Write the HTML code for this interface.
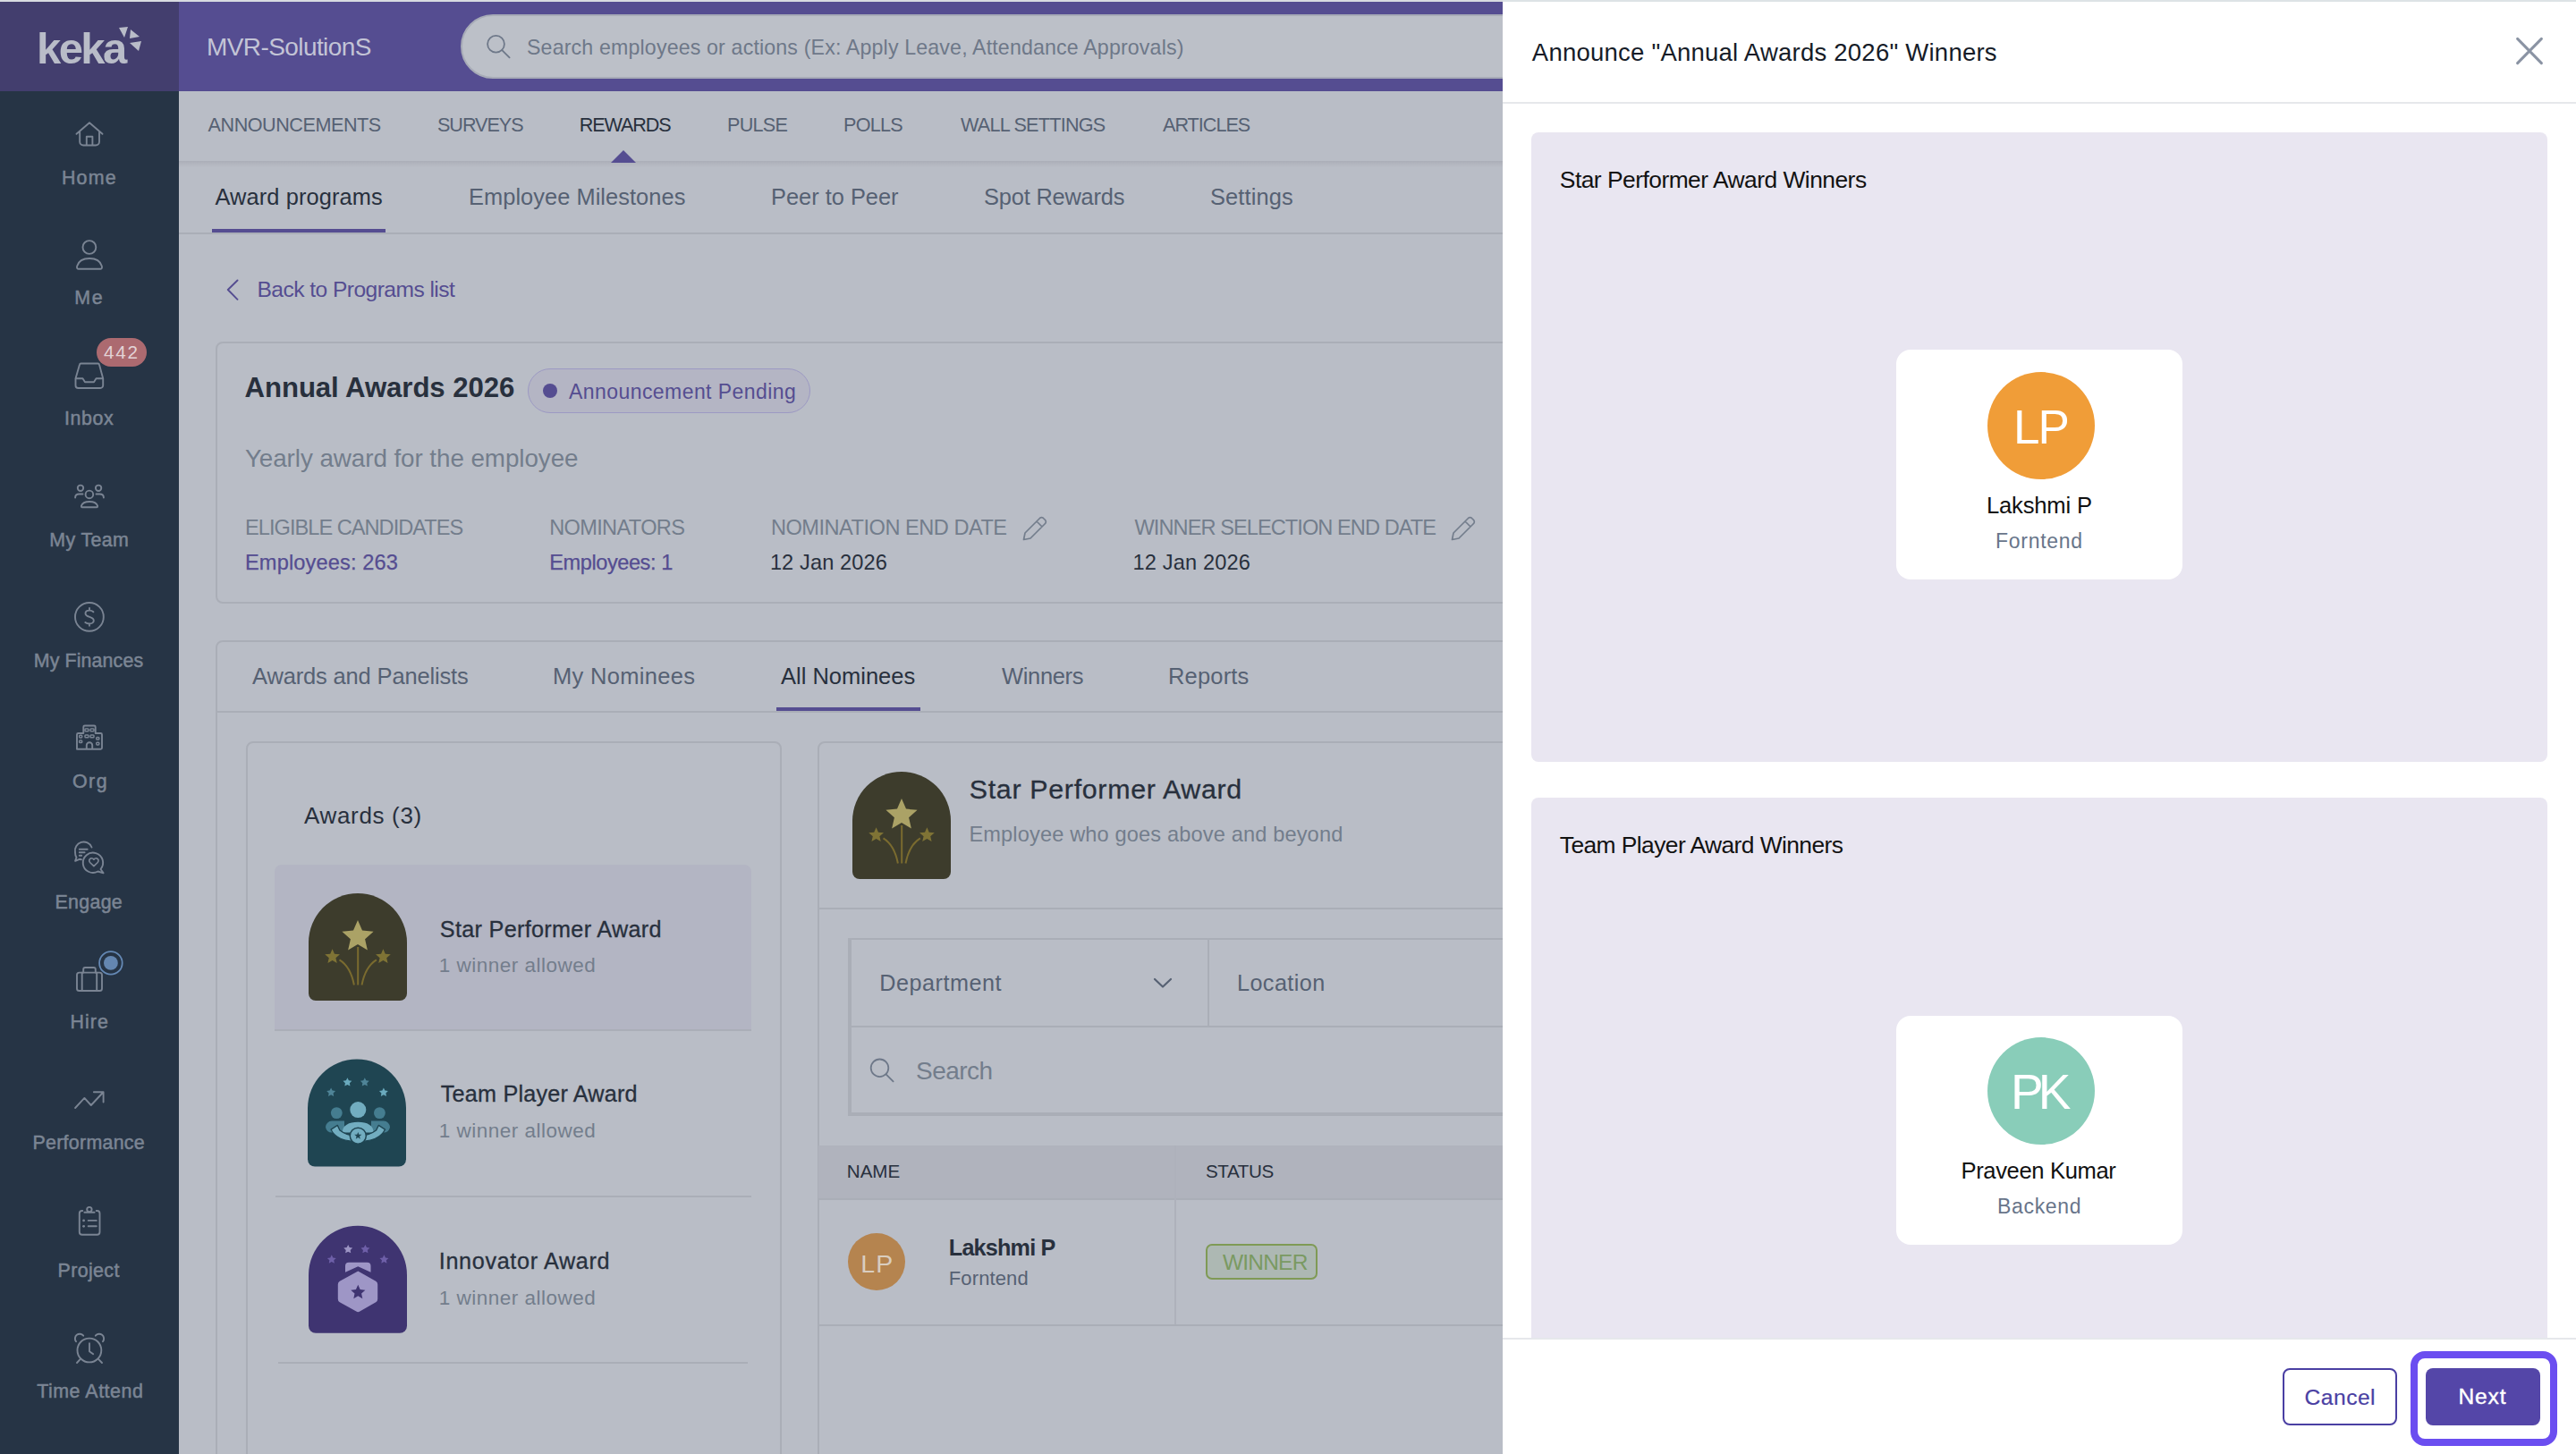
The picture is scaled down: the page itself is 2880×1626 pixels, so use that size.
<!DOCTYPE html><html><head><meta charset="utf-8"><style>
*{box-sizing:border-box;margin:0;padding:0}
html,body{width:2880px;height:1626px;overflow:hidden}
body{position:relative;font-family:"Liberation Sans",sans-serif;background:#b9bdc6}
.a{position:absolute}
.tx{position:absolute;white-space:nowrap;font-family:"Liberation Sans",sans-serif}
svg{position:absolute;overflow:visible}
</style></head><body><div class="a" style="left:0px;top:0px;width:1680px;height:2px;background:#d8dbe1"></div>
<div class="a" style="left:0px;top:2px;width:200px;height:1624px;background:#263445"></div>
<div class="a" style="left:0px;top:2px;width:200px;height:100px;background:#433e6e"></div>
<div class="a" style="left:200px;top:2px;width:1480px;height:100px;background:#554d91"></div>
<div class="a" style="left:515px;top:16px;width:1240px;height:72px;background:#bcc0c8;border:2px solid #a7abb7;border-radius:36px"></div>
<div class="a" style="left:200px;top:180px;width:1480px;height:7px;background:linear-gradient(#abaeb8,#b3b6bf 50%,#b9bdc6)"></div>
<div class="a" style="left:200px;top:260px;width:1480px;height:2px;background:#aaaeb7"></div>
<div class="a" style="left:237px;top:256px;width:194px;height:4px;background:#554d91"></div>
<div class="a" style="left:241px;top:382px;width:1480px;height:293px;border:2px solid #aaaeb7;border-radius:8px"></div>
<div class="a" style="left:590px;top:412px;width:316px;height:50px;background:#b4b5c4;border:1.5px solid #9c99c3;border-radius:25px"></div>
<div class="a" style="left:607px;top:428.8px;width:16px;height:16px;background:#554d91;border-radius:50%"></div>
<div class="a" style="left:241px;top:716px;width:1480px;height:1000px;border:2px solid #aaaeb7;border-radius:8px"></div>
<div class="a" style="left:241px;top:795px;width:1480px;height:2px;background:#aaaeb7"></div>
<div class="a" style="left:868px;top:791px;width:161px;height:4px;background:#554d91"></div>
<div class="a" style="left:275px;top:829px;width:599px;height:900px;border:2px solid #aaaeb7;border-radius:8px"></div>
<div class="a" style="left:307px;top:967px;width:533px;height:185px;background:#b3b5c3;border-radius:8px 8px 0 0"></div>
<div class="a" style="left:307px;top:1151px;width:533px;height:2px;background:#aaaeb7"></div>
<div class="a" style="left:308px;top:1337px;width:532px;height:2px;background:#aaaeb7"></div>
<div class="a" style="left:311px;top:1523px;width:525px;height:2px;background:#aaaeb7"></div>
<div class="a" style="left:914px;top:829px;width:900px;height:900px;border:2px solid #aaaeb7;border-radius:8px"></div>
<div class="a" style="left:915px;top:1015px;width:800px;height:2px;background:#aaaeb7"></div>
<div class="a" style="left:948px;top:1049px;width:800px;height:199px;border-top:2px solid #aaaeb7;border-left:4px solid #aaaeb7;border-bottom:4px solid #aaaeb7"></div>
<div class="a" style="left:1350px;top:1049px;width:2px;height:99px;background:#aaaeb7"></div>
<div class="a" style="left:950px;top:1147px;width:800px;height:2px;background:#aaaeb7"></div>
<div class="a" style="left:915px;top:1281px;width:800px;height:60px;background:#b0b3bd"></div>
<div class="a" style="left:915px;top:1340px;width:800px;height:2px;background:#aaaeb7"></div>
<div class="a" style="left:1313px;top:1281px;width:2px;height:201px;background:#aeb1bb"></div>
<div class="a" style="left:915px;top:1481px;width:800px;height:2px;background:#aaaeb7"></div>
<div class="a" style="left:948px;top:1379px;width:64px;height:64px;background:#b5844f;border-radius:50%"></div>
<div class="a" style="left:1348px;top:1391px;width:125px;height:40px;background:#adb8b3;border:2px solid #7f9a55;border-radius:7px"></div>
<div class="a" style="left:108px;top:378px;width:56px;height:32px;background:#ac6a70;border-radius:16px"></div>
<svg width="2880" height="1626" style="left:0;top:0"><path fill="none" stroke="#7a8493" stroke-width="1.9" stroke-linecap="round" stroke-linejoin="round" d="M85.5 149.8 L100 137.3 L114.5 149.8 M89.2 147 V158.5 a4 4 0 0 0 4 4 H107 a4 4 0 0 0 4-4 V147 M96.8 162.5 V152.8 H103.4 V162.5"/><circle fill="none" stroke="#7a8493" stroke-width="1.9" stroke-linecap="round" stroke-linejoin="round" cx="99.9" cy="276.5" r="7.4"/><path fill="none" stroke="#7a8493" stroke-width="1.9" stroke-linecap="round" stroke-linejoin="round" d="M87.5 300.7 C86 300.7 85.8 299 86.2 297.5 C87.8 292 93 289 100 289 C107 289 112.2 292 113.8 297.5 C114.2 299 114 300.7 112.5 300.7 Z"/><path fill="none" stroke="#7a8493" stroke-width="1.9" stroke-linecap="round" stroke-linejoin="round" d="M90.5 406.5 H109.5 a1.5 1.5 0 0 1 1.5 1.2 L115.2 423.2 V431 a3 3 0 0 1-3 3 H87.5 a3 3 0 0 1-3-3 V423.2 L89 407.7 a1.5 1.5 0 0 1 1.5-1.2 Z M84.5 423.2 H92.5 L95 427.2 H105 L107.5 423.2 H115.2"/><circle fill="none" stroke="#7a8493" stroke-width="1.9" stroke-linecap="round" stroke-linejoin="round" cx="99.9" cy="552.9" r="4.3"/><circle fill="none" stroke="#7a8493" stroke-width="1.9" stroke-linecap="round" stroke-linejoin="round" cx="90" cy="545.8" r="3.2"/><circle fill="none" stroke="#7a8493" stroke-width="1.9" stroke-linecap="round" stroke-linejoin="round" cx="110.1" cy="545.8" r="3.2"/><path fill="none" stroke="#7a8493" stroke-width="1.9" stroke-linecap="round" stroke-linejoin="round" d="M92 567.3 C91 567.3 90.8 566.5 91 565.5 C92 562.5 95.5 561 100 561 C104.5 561 108 562.5 109 565.5 C109.2 566.5 109 567.3 108 567.3 Z M92.5 552.5 H88.5 C86 552.5 84.1 554 84.1 556.6 M107.5 552.5 H111.5 C114 552.5 115.9 554 115.9 556.6"/><circle fill="none" stroke="#7a8493" stroke-width="1.9" stroke-linecap="round" stroke-linejoin="round" cx="99.9" cy="689.9" r="15.9"/><path fill="none" stroke="#7a8493" stroke-width="1.9" stroke-linecap="round" stroke-linejoin="round" d="M104.4 684.3 C103 683 101.5 682.6 100 682.6 C97.5 682.6 95.5 683.8 95.5 686 C95.5 691 104.8 688.8 104.8 694 C104.8 696.2 102.5 697.5 100 697.5 C98 697.5 96.5 697 95.3 696 M100 680 V682.6 M100 697.5 V699.7"/><path fill="none" stroke="#7a8493" stroke-width="1.9" stroke-linecap="round" stroke-linejoin="round" d="M86 837.8 V821.5 a1.5 1.5 0 0 1 1.5-1.5 H93.3 V813 a1.5 1.5 0 0 1 1.5-1.5 H105.2 a1.5 1.5 0 0 1 1.5 1.5 V820 H112.5 a1.5 1.5 0 0 1 1.5 1.5 V836.3 a1.5 1.5 0 0 1-1.5 1.5 Z M96.8 837.8 V833.5 a3.2 3.2 0 0 1 6.4 0 V837.8"/><rect fill="none" stroke="#7a8493" stroke-width="1.5" x="88.7" y="822.3" width="3" height="2.6" rx="0.8"/><rect fill="none" stroke="#7a8493" stroke-width="1.5" x="88.7" y="828" width="3" height="2.6" rx="0.8"/><rect fill="none" stroke="#7a8493" stroke-width="1.5" x="107.8" y="824.5" width="3" height="2.6" rx="0.8"/><rect fill="none" stroke="#7a8493" stroke-width="1.5" x="107.8" y="830.3" width="3" height="2.6" rx="0.8"/><rect fill="none" stroke="#7a8493" stroke-width="1.5" x="95" y="815" width="4" height="2.8" rx="0.8"/><rect fill="none" stroke="#7a8493" stroke-width="1.5" x="101" y="815" width="4" height="2.8" rx="0.8"/><rect fill="none" stroke="#7a8493" stroke-width="1.5" x="95" y="822" width="4" height="2.8" rx="0.8"/><rect fill="none" stroke="#7a8493" stroke-width="1.5" x="101" y="822" width="4" height="2.8" rx="0.8"/><path fill="none" stroke="#7a8493" stroke-width="1.9" stroke-linecap="round" stroke-linejoin="round" d="M102.5 947.5 A9.7 9.7 0 0 0 84 953 C84 955.5 84.5 957.5 85.5 958.8 L84.1 962.9 L88.8 960.8 L91 961.3 M88.8 949.8 H97.7 M88.8 953.2 H94.6 M88.8 956.7 H91.2"/><path fill="none" stroke="#7a8493" stroke-width="1.9" stroke-linecap="round" stroke-linejoin="round" d="M112.5 972 A11.2 11.2 0 1 0 109.5 974.5 L115.6 976.3 Z"/><path fill="none" stroke="#7a8493" stroke-width="1.7" stroke-linejoin="round" d="M104.9 968.6 L100.6 964.5 C99.2 963 99.5 960.3 101.8 959.8 C103.3 959.5 104.3 960.3 104.9 961.2 C105.5 960.3 106.5 959.5 108 959.8 C110.3 960.3 110.6 963 109.2 964.5 Z"/><rect fill="none" stroke="#7a8493" stroke-width="1.9" stroke-linecap="round" stroke-linejoin="round" x="86" y="1087.6" width="28" height="20.4" rx="2.6"/><path fill="none" stroke="#7a8493" stroke-width="1.9" stroke-linecap="round" stroke-linejoin="round" d="M93.2 1087.6 V1084 a2 2 0 0 1 2-2 H104.8 a2 2 0 0 1 2 2 V1087.6 M91.7 1087.6 V1108 M108.2 1087.6 V1108"/><circle cx="123.9" cy="1076.9" r="12.8" fill="#263445" stroke="#6589b5" stroke-width="1.8"/><circle cx="123.9" cy="1076.9" r="7.9" fill="#6486b0"/><path fill="none" stroke="#7a8493" stroke-width="1.9" stroke-linecap="round" stroke-linejoin="round" d="M84.1 1239 L94.4 1227.9 L101.8 1236 L115.3 1221.5 M104.9 1221.2 H115.6 V1232.5"/><path fill="none" stroke="#7a8493" stroke-width="1.9" stroke-linecap="round" stroke-linejoin="round" d="M92.3 1354 H91.8 a3 3 0 0 0-3 3 V1377.7 a3 3 0 0 0 3 3 H108.5 a3 3 0 0 0 3-3 V1357 a3 3 0 0 0-3-3 H107.7 M94.4 1355.8 H105.6"/><circle fill="none" stroke="#7a8493" stroke-width="1.9" stroke-linecap="round" stroke-linejoin="round" cx="99.9" cy="1352.6" r="2.7"/><circle cx="93.6" cy="1364.9" r="1.4" fill="#7a8493"/><circle cx="93.6" cy="1371.3" r="1.4" fill="#7a8493"/><path fill="none" stroke="#7a8493" stroke-width="1.9" stroke-linecap="round" stroke-linejoin="round" d="M98.7 1364.9 H107.8 M98.7 1371.3 H107.8"/><circle fill="none" stroke="#7a8493" stroke-width="1.9" stroke-linecap="round" stroke-linejoin="round" cx="99.9" cy="1510" r="13.4"/><path fill="none" stroke="#7a8493" stroke-width="1.9" stroke-linecap="round" stroke-linejoin="round" d="M100 1502.3 V1511.2 L104.2 1514.3 M85 1500.2 A5.2 5.2 0 0 1 93.2 1493.7 M115 1500.2 A5.2 5.2 0 0 0 106.8 1493.7 M89.8 1519.8 L86 1524 M110 1519.8 L114 1524"/><polygon fill="#b9bcc8" points="133,31 143,30 139,42"/><polygon fill="#b9bcc8" points="146,33 156,41 145,43"/><polygon fill="#b9bcc8" points="145,48 158,46 155,57"/><circle cx="554.5" cy="49.3" r="9.4" fill="none" stroke="#6e7889" stroke-width="1.8"/><path d="M561.3 56.1 L569.6 64.4" stroke="#6e7889" stroke-width="1.8" stroke-linecap="round"/><polygon fill="#554d91" points="683,182 697,168 711,182"/><path d="M265.5 313.5 L254.8 324 L265.5 334.8" fill="none" stroke="#554d91" stroke-width="1.9" stroke-linecap="round" stroke-linejoin="round"/><path transform="translate(1143,579)" d="M1.5 24.5 L3 17 L19 1 a3 3 0 0 1 5 0 L25 2 a3 3 0 0 1 0 5 L9 23 Z M16 4 L22 10" fill="none" stroke="#737d8c" stroke-width="1.7" stroke-linejoin="round"/><path transform="translate(1622,579)" d="M1.5 24.5 L3 17 L19 1 a3 3 0 0 1 5 0 L25 2 a3 3 0 0 1 0 5 L9 23 Z M16 4 L22 10" fill="none" stroke="#737d8c" stroke-width="1.7" stroke-linejoin="round"/><path d="M1291 1095 L1300 1103.5 L1309 1095" fill="none" stroke="#566173" stroke-width="2.2" stroke-linecap="round" stroke-linejoin="round"/><circle cx="983.5" cy="1194.3" r="9.8" fill="none" stroke="#6e7889" stroke-width="1.8"/><path d="M990.6 1201.4 L998.6 1209.4" stroke="#6e7889" stroke-width="1.8" stroke-linecap="round"/><g transform="translate(345,999)"><path d="M0 55 A55 55 0 0 1 110 55 V112 a8 8 0 0 1-8 8 H8 a8 8 0 0 1-8-8 Z" fill="#3d3c2c"/><polygon fill="#aba266" points="55.00,30.00 60.00,41.62 72.59,42.78 63.08,51.13 65.87,63.47 55.00,57.00 44.13,63.47 46.92,51.13 37.41,42.78 50.00,41.62"/><polygon fill="#7f7335" points="26.60,62.20 28.95,67.76 34.97,68.28 30.40,72.24 31.77,78.12 26.60,75.00 21.43,78.12 22.80,72.24 18.23,68.28 24.25,67.76"/><polygon fill="#7f7335" points="83.40,62.20 85.75,67.76 91.77,68.28 87.20,72.24 88.57,78.12 83.40,75.00 78.23,78.12 79.60,72.24 75.03,68.28 81.05,67.76"/><path d="M55.2 60 V102.5 M34.5 74.3 Q47 82 50.9 102.5 M75.9 74.3 Q63.4 82 59.5 102.5" fill="none" stroke="#7a6b2f" stroke-width="2"/></g><g transform="translate(344,1184.6)"><path d="M0 55 A55 55 0 0 1 110 55 V112 a8 8 0 0 1-8 8 H8 a8 8 0 0 1-8-8 Z" fill="#1f4552"/><polygon fill="#6aaabd" points="44.40,20.60 45.93,23.70 49.35,24.19 46.87,26.60 47.46,30.01 44.40,28.40 41.34,30.01 41.93,26.60 39.45,24.19 42.87,23.70"/><polygon fill="#4f8497" points="63.80,20.60 65.33,23.70 68.75,24.19 66.27,26.60 66.86,30.01 63.80,28.40 60.74,30.01 61.33,26.60 58.85,24.19 62.27,23.70"/><polygon fill="#4f8497" points="26.10,31.90 27.63,35.00 31.05,35.49 28.57,37.90 29.16,41.31 26.10,39.70 23.04,41.31 23.63,37.90 21.15,35.49 24.57,35.00"/><polygon fill="#6aaabd" points="84.90,31.90 86.43,35.00 89.85,35.49 87.37,37.90 87.96,41.31 84.90,39.70 81.84,41.31 82.43,37.90 79.95,35.49 83.37,35.00"/><circle cx="32.3" cy="60" r="6.4" fill="#457d90"/><circle cx="80.4" cy="60" r="6.4" fill="#457d90"/><circle cx="56.3" cy="56.5" r="9" fill="#72adc0"/><path d="M20 76 a7 7 0 0 1 7-7 H41 V82 H27 a7 7 0 0 1-7-6 Z M92 76 a7 7 0 0 0-7-7 H71 V82 H85 a7 7 0 0 0 7-6 Z" fill="#457d90"/><path d="M38.7 82 C38.7 74 46 70.2 56.3 70.2 C66.6 70.2 73.6 74 73.6 82 Z" fill="#72adc0"/><path d="M26 78.5 L33.3 73.8 L36 79.5 Q44 86 56 86 Q68 86 76.5 79.5 L79.3 73.8 L86.5 78.5 Q80 92 56 92 Q32 92 26 78.5 Z" fill="#72adc0" stroke="#1f4552" stroke-width="1.3" stroke-linejoin="round"/><circle cx="56.3" cy="85.6" r="9" fill="#72adc0" stroke="#1f4552" stroke-width="1.5"/><polygon fill="#1f4552" points="56.30,81.30 57.36,84.14 60.39,84.27 58.02,86.16 58.83,89.08 56.30,87.41 53.77,89.08 54.58,86.16 52.21,84.27 55.24,84.14"/></g><g transform="translate(345,1370.8)"><path d="M0 55 A55 55 0 0 1 110 55 V112 a8 8 0 0 1-8 8 H8 a8 8 0 0 1-8-8 Z" fill="#3f3471"/><polygon fill="#9c94c4" points="44.20,21.10 45.73,24.20 49.15,24.69 46.67,27.10 47.26,30.51 44.20,28.90 41.14,30.51 41.73,27.10 39.25,24.69 42.67,24.20"/><polygon fill="#6e5fa8" points="63.40,21.10 64.93,24.20 68.35,24.69 65.87,27.10 66.46,30.51 63.40,28.90 60.34,30.51 60.93,27.10 58.45,24.69 61.87,24.20"/><polygon fill="#6e5fa8" points="25.80,32.50 27.33,35.60 30.75,36.09 28.27,38.50 28.86,41.91 25.80,40.30 22.74,41.91 23.33,38.50 20.85,36.09 24.27,35.60"/><polygon fill="#6e5fa8" points="84.40,32.50 85.93,35.60 89.35,36.09 86.87,38.50 87.46,41.91 84.40,40.30 81.34,41.91 81.93,38.50 79.45,36.09 82.87,35.60"/><path d="M41 52 V45 a4 4 0 0 1 4-4 H65.5 a4 4 0 0 1 4 4 V52 L55.3 45.5 Z" fill="#9e96c6"/><path d="M55.3 50.6 L75.2 62 a4 4 0 0 1 2 3.5 V82 a4 4 0 0 1-2 3.5 L57.3 95.8 a4 4 0 0 1-4 0 L34.8 85.5 a4 4 0 0 1-2-3.5 V65.5 a4 4 0 0 1 2-3.5 Z" fill="#9e96c6"/><polygon fill="#3f3471" points="55.30,66.00 57.65,71.26 63.38,71.87 59.10,75.74 60.30,81.38 55.30,78.50 50.30,81.38 51.50,75.74 47.22,71.87 52.95,71.26"/></g><g transform="translate(953,863)"><path d="M0 55 A55 55 0 0 1 110 55 V112 a8 8 0 0 1-8 8 H8 a8 8 0 0 1-8-8 Z" fill="#3d3c2c"/><polygon fill="#aba266" points="55.00,30.00 60.00,41.62 72.59,42.78 63.08,51.13 65.87,63.47 55.00,57.00 44.13,63.47 46.92,51.13 37.41,42.78 50.00,41.62"/><polygon fill="#7f7335" points="26.60,62.20 28.95,67.76 34.97,68.28 30.40,72.24 31.77,78.12 26.60,75.00 21.43,78.12 22.80,72.24 18.23,68.28 24.25,67.76"/><polygon fill="#7f7335" points="83.40,62.20 85.75,67.76 91.77,68.28 87.20,72.24 88.57,78.12 83.40,75.00 78.23,78.12 79.60,72.24 75.03,68.28 81.05,67.76"/><path d="M55.2 60 V102.5 M34.5 74.3 Q47 82 50.9 102.5 M75.9 74.3 Q63.4 82 59.5 102.5" fill="none" stroke="#7a6b2f" stroke-width="2"/></g></svg>
<div class="tx" style="left:41px;top:29.6px;font-size:49px;line-height:49px;font-weight:700;color:#b9bcc8;letter-spacing:-2.6px">keka</div>
<div class="a" style="left:1680px;top:0px;width:1200px;height:1626px;background:#ffffff"></div>
<div class="a" style="left:1680px;top:0px;width:1200px;height:2px;background:#dde3e6"></div>
<div class="a" style="left:1680px;top:114px;width:1200px;height:2px;background:#e6e8eb"></div>
<div class="a" style="left:1712px;top:148px;width:1136px;height:704px;background:#e9e6f1;border-radius:8px"></div>
<div class="a" style="left:2120px;top:391px;width:320px;height:257px;background:#fff;border-radius:16px"></div>
<div class="a" style="left:2222px;top:416px;width:120px;height:120px;background:#f09d38;border-radius:50%"></div>
<div class="a" style="left:1712px;top:892px;width:1136px;height:700px;background:#e9e6f1;border-radius:8px"></div>
<div class="a" style="left:2120px;top:1136px;width:320px;height:256px;background:#fff;border-radius:16px"></div>
<div class="a" style="left:2222px;top:1160px;width:120px;height:120px;background:#89cdb9;border-radius:50%"></div>
<div class="a" style="left:1680px;top:1496px;width:1200px;height:130px;background:#fff;border-top:2px solid #e6e8eb"></div>
<div class="a" style="left:2552px;top:1530px;width:128px;height:64px;border:2px solid #4a3fa3;border-radius:8px;background:#fff"></div>
<div class="a" style="left:2695px;top:1511px;width:164px;height:106px;border:8px solid #6b4ef0;border-radius:16px"></div>
<div class="a" style="left:2712px;top:1530px;width:128px;height:64px;background:#5446a8;border-radius:8px"></div>
<svg width="2880" height="1626" style="left:0;top:0"><path d="M2814.6 43.4 L2841.4 70.6 M2841.4 43.4 L2814.6 70.6" stroke="#8a93a3" stroke-width="3" stroke-linecap="round"/></svg>
<div class="tx" style="left:69.00px;top:188.61px;font-size:21.40px;line-height:21.40px;font-weight:400;color:#7b8594;letter-spacing:1.167px;-webkit-text-stroke:0.5px #7b8594;">Home</div>
<div class="tx" style="left:83.30px;top:323.21px;font-size:21.40px;line-height:21.40px;font-weight:400;color:#7b8594;letter-spacing:1.700px;-webkit-text-stroke:0.5px #7b8594;">Me</div>
<div class="tx" style="left:72.00px;top:457.81px;font-size:21.40px;line-height:21.40px;font-weight:400;color:#7b8594;letter-spacing:0.575px;-webkit-text-stroke:0.5px #7b8594;">Inbox</div>
<div class="tx" style="left:55.30px;top:593.61px;font-size:21.40px;line-height:21.40px;font-weight:400;color:#7b8594;letter-spacing:0.367px;-webkit-text-stroke:0.5px #7b8594;">My Team</div>
<div class="tx" style="left:37.70px;top:729.01px;font-size:21.40px;line-height:21.40px;font-weight:400;color:#7b8594;letter-spacing:0.120px;-webkit-text-stroke:0.5px #7b8594;">My Finances</div>
<div class="tx" style="left:80.90px;top:863.81px;font-size:21.40px;line-height:21.40px;font-weight:400;color:#7b8594;letter-spacing:1.550px;-webkit-text-stroke:0.5px #7b8594;">Org</div>
<div class="tx" style="left:61.40px;top:998.81px;font-size:21.40px;line-height:21.40px;font-weight:400;color:#7b8594;letter-spacing:0.320px;-webkit-text-stroke:0.5px #7b8594;">Engage</div>
<div class="tx" style="left:78.50px;top:1133.21px;font-size:21.40px;line-height:21.40px;font-weight:400;color:#7b8594;letter-spacing:1.033px;-webkit-text-stroke:0.5px #7b8594;">Hire</div>
<div class="tx" style="left:36.40px;top:1268.41px;font-size:21.40px;line-height:21.40px;font-weight:400;color:#7b8594;letter-spacing:0.290px;-webkit-text-stroke:0.5px #7b8594;">Performance</div>
<div class="tx" style="left:64.50px;top:1410.61px;font-size:21.40px;line-height:21.40px;font-weight:400;color:#7b8594;letter-spacing:0.383px;-webkit-text-stroke:0.5px #7b8594;">Project</div>
<div class="tx" style="left:41.20px;top:1545.81px;font-size:21.40px;line-height:21.40px;font-weight:400;color:#7b8594;letter-spacing:0.530px;-webkit-text-stroke:0.5px #7b8594;">Time Attend</div>
<div class="tx" style="left:116.00px;top:384.21px;font-size:20.70px;line-height:20.70px;font-weight:400;color:#e3d3d6;letter-spacing:1.750px;">442</div>
<div class="tx" style="left:231.00px;top:39.40px;font-size:28.00px;line-height:28.00px;font-weight:400;color:#c3c4d6;letter-spacing:-0.583px;">MVR-SolutionS</div>
<div class="tx" style="left:589.00px;top:42.28px;font-size:23.20px;line-height:23.20px;font-weight:400;color:#6e7889;letter-spacing:0.152px;">Search employees or actions (Ex: Apply Leave, Attendance Approvals)</div>
<div class="tx" style="left:232.60px;top:129.24px;font-size:21.60px;line-height:21.60px;font-weight:400;color:#566173;letter-spacing:-0.467px;">ANNOUNCEMENTS</div>
<div class="tx" style="left:489.00px;top:129.24px;font-size:21.60px;line-height:21.60px;font-weight:400;color:#566173;letter-spacing:-1.033px;">SURVEYS</div>
<div class="tx" style="left:647.80px;top:129.24px;font-size:21.60px;line-height:21.60px;font-weight:400;color:#28303d;letter-spacing:-1.133px;">REWARDS</div>
<div class="tx" style="left:813.00px;top:129.24px;font-size:21.60px;line-height:21.60px;font-weight:400;color:#566173;letter-spacing:-0.750px;">PULSE</div>
<div class="tx" style="left:943.00px;top:129.24px;font-size:21.60px;line-height:21.60px;font-weight:400;color:#566173;letter-spacing:-0.750px;">POLLS</div>
<div class="tx" style="left:1074.00px;top:129.24px;font-size:21.60px;line-height:21.60px;font-weight:400;color:#566173;letter-spacing:-0.750px;">WALL SETTINGS</div>
<div class="tx" style="left:1300.00px;top:129.24px;font-size:21.60px;line-height:21.60px;font-weight:400;color:#566173;letter-spacing:-1.000px;">ARTICLES</div>
<div class="tx" style="left:240.50px;top:208.41px;font-size:25.40px;line-height:25.40px;font-weight:400;color:#28303d;letter-spacing:0.115px;">Award programs</div>
<div class="tx" style="left:524.00px;top:208.41px;font-size:25.40px;line-height:25.40px;font-weight:400;color:#566173;letter-spacing:0.056px;">Employee Milestones</div>
<div class="tx" style="left:862.00px;top:208.41px;font-size:25.40px;line-height:25.40px;font-weight:400;color:#566173;letter-spacing:0.000px;">Peer to Peer</div>
<div class="tx" style="left:1100.00px;top:208.41px;font-size:25.40px;line-height:25.40px;font-weight:400;color:#566173;letter-spacing:-0.182px;">Spot Rewards</div>
<div class="tx" style="left:1353.00px;top:208.41px;font-size:25.40px;line-height:25.40px;font-weight:400;color:#566173;letter-spacing:0.143px;">Settings</div>
<div class="tx" style="left:287.50px;top:312.09px;font-size:24.60px;line-height:24.60px;font-weight:400;color:#554d91;letter-spacing:-0.550px;">Back to Programs list</div>
<div class="tx" style="left:273.60px;top:417.68px;font-size:31.20px;line-height:31.20px;font-weight:700;color:#28303d;letter-spacing:-0.100px;">Annual Awards 2026</div>
<div class="tx" style="left:636.10px;top:427.45px;font-size:23.00px;line-height:23.00px;font-weight:400;color:#554d91;letter-spacing:0.426px;">Announcement Pending</div>
<div class="tx" style="left:273.90px;top:498.77px;font-size:27.80px;line-height:27.80px;font-weight:400;color:#737d8c;letter-spacing:-0.064px;">Yearly award for the employee</div>
<div class="tx" style="left:274.00px;top:578.74px;font-size:23.60px;line-height:23.60px;font-weight:400;color:#737d8c;letter-spacing:-0.972px;">ELIGIBLE CANDIDATES</div>
<div class="tx" style="left:274.00px;top:617.94px;font-size:23.60px;line-height:23.60px;font-weight:400;color:#554d91;letter-spacing:0.131px;-webkit-text-stroke:0.25px #554d91;">Employees: 263</div>
<div class="tx" style="left:614.20px;top:578.74px;font-size:23.60px;line-height:23.60px;font-weight:400;color:#737d8c;letter-spacing:-0.667px;">NOMINATORS</div>
<div class="tx" style="left:614.20px;top:617.94px;font-size:23.60px;line-height:23.60px;font-weight:400;color:#554d91;letter-spacing:-0.436px;-webkit-text-stroke:0.25px #554d91;">Employees: 1</div>
<div class="tx" style="left:861.90px;top:578.74px;font-size:23.60px;line-height:23.60px;font-weight:400;color:#737d8c;letter-spacing:-0.494px;">NOMINATION END DATE</div>
<div class="tx" style="left:860.90px;top:617.94px;font-size:23.60px;line-height:23.60px;font-weight:400;color:#28303d;letter-spacing:0.110px;">12 Jan 2026</div>
<div class="tx" style="left:1268.50px;top:578.74px;font-size:23.60px;line-height:23.60px;font-weight:400;color:#737d8c;letter-spacing:-0.938px;">WINNER SELECTION END DATE</div>
<div class="tx" style="left:1266.50px;top:617.94px;font-size:23.60px;line-height:23.60px;font-weight:400;color:#28303d;letter-spacing:0.150px;">12 Jan 2026</div>
<div class="tx" style="left:282.00px;top:743.53px;font-size:25.50px;line-height:25.50px;font-weight:400;color:#566173;letter-spacing:-0.158px;">Awards and Panelists</div>
<div class="tx" style="left:618.00px;top:743.53px;font-size:25.50px;line-height:25.50px;font-weight:400;color:#566173;letter-spacing:0.300px;">My Nominees</div>
<div class="tx" style="left:873.00px;top:743.53px;font-size:25.50px;line-height:25.50px;font-weight:400;color:#28303d;letter-spacing:0.000px;">All Nominees</div>
<div class="tx" style="left:1120.00px;top:743.53px;font-size:25.50px;line-height:25.50px;font-weight:400;color:#566173;letter-spacing:-0.333px;">Winners</div>
<div class="tx" style="left:1306.00px;top:743.53px;font-size:25.50px;line-height:25.50px;font-weight:400;color:#566173;letter-spacing:0.167px;">Reports</div>
<div class="tx" style="left:340.00px;top:898.90px;font-size:26.00px;line-height:26.00px;font-weight:400;color:#28303d;letter-spacing:0.667px;">Awards (3)</div>
<div class="tx" style="left:491.80px;top:1027.18px;font-size:25.20px;line-height:25.20px;font-weight:400;color:#28303d;letter-spacing:0.316px;-webkit-text-stroke:0.3px #28303d;">Star Performer Award</div>
<div class="tx" style="left:490.80px;top:1069.28px;font-size:22.50px;line-height:22.50px;font-weight:400;color:#737d8c;letter-spacing:0.493px;">1 winner allowed</div>
<div class="tx" style="left:492.80px;top:1211.18px;font-size:25.20px;line-height:25.20px;font-weight:400;color:#28303d;letter-spacing:0.200px;-webkit-text-stroke:0.3px #28303d;">Team Player Award</div>
<div class="tx" style="left:490.80px;top:1254.28px;font-size:22.50px;line-height:22.50px;font-weight:400;color:#737d8c;letter-spacing:0.493px;">1 winner allowed</div>
<div class="tx" style="left:490.80px;top:1398.18px;font-size:25.20px;line-height:25.20px;font-weight:400;color:#28303d;letter-spacing:0.657px;-webkit-text-stroke:0.3px #28303d;">Innovator Award</div>
<div class="tx" style="left:490.80px;top:1441.28px;font-size:22.50px;line-height:22.50px;font-weight:400;color:#737d8c;letter-spacing:0.493px;">1 winner allowed</div>
<div class="tx" style="left:1083.80px;top:867.36px;font-size:30.40px;line-height:30.40px;font-weight:400;color:#28303d;letter-spacing:0.674px;-webkit-text-stroke:0.3px #28303d;">Star Performer Award</div>
<div class="tx" style="left:1083.40px;top:921.74px;font-size:23.60px;line-height:23.60px;font-weight:400;color:#737d8c;letter-spacing:0.142px;">Employee who goes above and beyond</div>
<div class="tx" style="left:983.20px;top:1087.38px;font-size:25.20px;line-height:25.20px;font-weight:400;color:#566173;letter-spacing:0.522px;">Department</div>
<div class="tx" style="left:1383.00px;top:1087.38px;font-size:25.20px;line-height:25.20px;font-weight:400;color:#566173;letter-spacing:0.429px;">Location</div>
<div class="tx" style="left:1024.00px;top:1183.80px;font-size:28.00px;line-height:28.00px;font-weight:400;color:#737d8c;letter-spacing:-0.520px;">Search</div>
<div class="tx" style="left:946.80px;top:1299.69px;font-size:20.60px;line-height:20.60px;font-weight:400;color:#28303d;letter-spacing:-0.033px;">NAME</div>
<div class="tx" style="left:1347.90px;top:1299.69px;font-size:20.60px;line-height:20.60px;font-weight:400;color:#28303d;letter-spacing:-0.380px;">STATUS</div>
<div class="tx" style="left:1060.80px;top:1383.38px;font-size:25.20px;line-height:25.20px;font-weight:700;color:#28303d;letter-spacing:-0.800px;">Lakshmi P</div>
<div class="tx" style="left:1060.80px;top:1419.30px;font-size:22.00px;line-height:22.00px;font-weight:400;color:#566173;letter-spacing:0.114px;">Forntend</div>
<div class="tx" style="left:1367.00px;top:1400.17px;font-size:24.50px;line-height:24.50px;font-weight:400;color:#7a9a62;letter-spacing:-0.800px;">WINNER</div>
<div class="tx" style="left:962.30px;top:1399.18px;font-size:28.50px;line-height:28.50px;font-weight:400;color:#d9cdbf;letter-spacing:1.100px;">LP</div>
<div class="tx" style="left:1712.80px;top:45.22px;font-size:27.50px;line-height:27.50px;font-weight:400;color:#161c28;letter-spacing:0.236px;">Announce "Annual Awards 2026" Winners</div>
<div class="tx" style="left:1743.80px;top:187.76px;font-size:26.40px;line-height:26.40px;font-weight:400;color:#121212;letter-spacing:-0.522px;">Star Performer Award Winners</div>
<div class="tx" style="left:2251.00px;top:450.95px;font-size:53.00px;line-height:53.00px;font-weight:400;color:#ffffff;letter-spacing:-2.000px;">LP</div>
<div class="tx" style="left:2221.00px;top:552.64px;font-size:25.60px;line-height:25.60px;font-weight:400;color:#111111;letter-spacing:-0.188px;">Lakshmi P</div>
<div class="tx" style="left:2231.00px;top:594.45px;font-size:23.00px;line-height:23.00px;font-weight:400;color:#68758a;letter-spacing:0.714px;">Forntend</div>
<div class="tx" style="left:1743.80px;top:931.96px;font-size:26.40px;line-height:26.40px;font-weight:400;color:#121212;letter-spacing:-0.575px;">Team Player Award Winners</div>
<div class="tx" style="left:2248.00px;top:1193.75px;font-size:55.00px;line-height:55.00px;font-weight:400;color:#ffffff;letter-spacing:-6.000px;">PK</div>
<div class="tx" style="left:2192.50px;top:1296.64px;font-size:25.60px;line-height:25.60px;font-weight:400;color:#111111;letter-spacing:-0.375px;">Praveen Kumar</div>
<div class="tx" style="left:2233.00px;top:1338.45px;font-size:23.00px;line-height:23.00px;font-weight:400;color:#68758a;letter-spacing:0.667px;">Backend</div>
<div class="tx" style="left:2576.60px;top:1550.69px;font-size:24.60px;line-height:24.60px;font-weight:400;color:#4a3fa3;letter-spacing:0.480px;-webkit-text-stroke:0.2px #4a3fa3;">Cancel</div>
<div class="tx" style="left:2748.50px;top:1549.69px;font-size:24.60px;line-height:24.60px;font-weight:400;color:#ffffff;letter-spacing:0.833px;-webkit-text-stroke:0.4px #ffffff;">Next</div></body></html>
